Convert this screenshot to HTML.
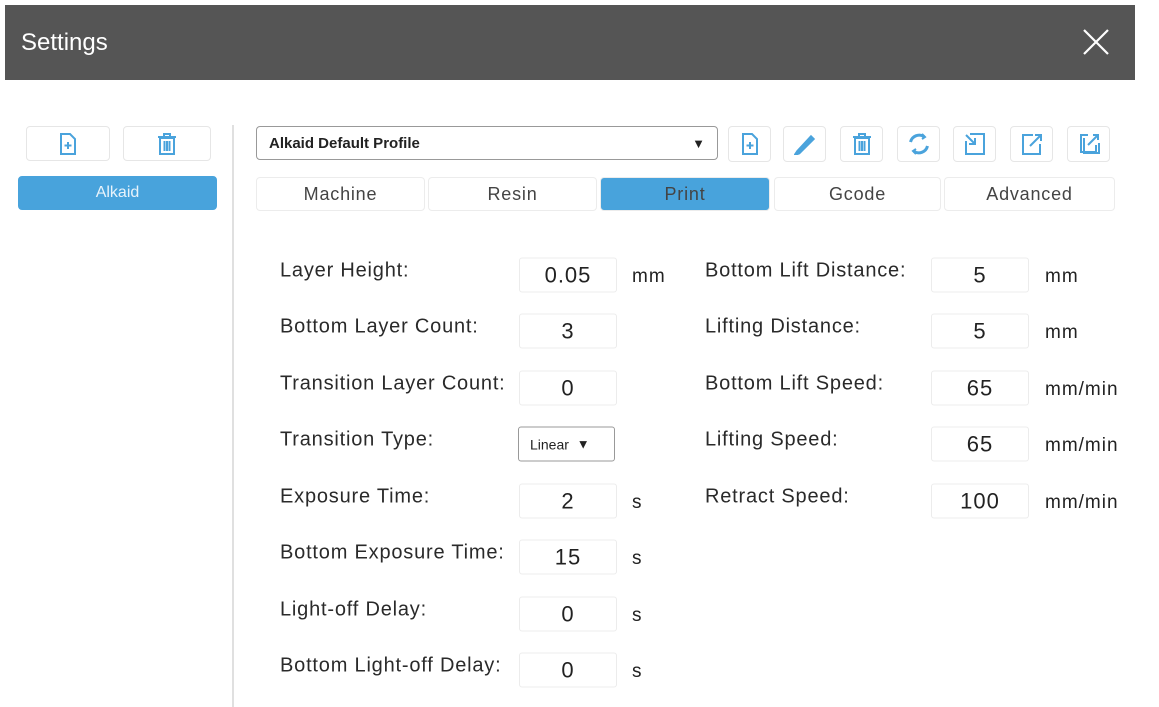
<!DOCTYPE html>
<html><head><meta charset="utf-8"><style>
*{box-sizing:border-box;margin:0;padding:0}
body{width:1159px;height:707px;background:#fff;position:relative;overflow:hidden;font-family:"Liberation Sans",sans-serif;color:#222}
.a{position:absolute}
.title{left:5px;top:5px;width:1130px;height:75px;background:#555555;color:#fff;font-size:24px;line-height:75px;padding-left:16px}
.btn{position:absolute;border:1px solid #e6e6e6;border-radius:4px;background:#fff;display:flex;align-items:center;justify-content:center}
.blue{background:#48a3dc;color:#e8f3fb;border-color:#48a3dc}
.tab{position:absolute;top:177px;height:34px;border:1px solid #ececec;border-radius:4px;font-size:18px;letter-spacing:0.8px;color:#444;display:flex;align-items:center;justify-content:center}
.lbl{position:absolute;font-size:20px;letter-spacing:0.8px;color:#2a2a2a;transform:translateY(-50%)}
.inp{position:absolute;width:98px;height:35px;border:1px solid #ececec;border-radius:3px;font-size:22px;letter-spacing:1px;display:flex;align-items:center;justify-content:center;transform:translateY(-50%)}
.unit{position:absolute;font-size:19px;letter-spacing:1px;transform:translateY(-40%)}
svg{stroke:#4aa3dc;fill:none;stroke-width:2}
</style></head><body>
<div class="a title">Settings</div>
<div class="a" style="left:1082px;top:28px;"><svg width="28" height="28" style="stroke:#fff;stroke-width:2.2"><path d="M2 2L26 26M26 2L2 26"/></svg></div>

<div class="btn" style="left:26px;top:126px;width:84px;height:35px"><svg width="18" height="22"><path d="M2 1h9l5 5v15H2z"/><path d="M9 9v7M5.5 12.5h7"/></svg></div>
<div class="btn" style="left:123px;top:126px;width:88px;height:35px"><svg width="20" height="22"><path d="M1 4h18M7 4V1h6v3M3 5h14v16H3zM7.5 8v10M10 8v10M12.5 8v10"/></svg></div>
<div class="btn blue" style="left:18px;top:176px;width:199px;height:34px;font-size:16px">Alkaid</div>
<div class="a" style="left:232px;top:125px;width:2px;height:582px;background:#e0e0e0"></div>

<div class="btn" style="left:256px;top:126px;width:462px;height:34px;border:1px solid #999;justify-content:space-between;padding:0 12px;font-size:15px;font-weight:bold;color:#222"><span>Alkaid Default Profile</span><span style="font-size:13px">▼</span></div>

<div class="btn" style="left:728px;top:126px;width:43px;height:36px"><svg width="18" height="22"><path d="M2 1h9l5 5v15H2z"/><path d="M9 9v7M5.5 12.5h7"/></svg></div>
<div class="btn" style="left:783px;top:126px;width:43px;height:36px"><svg width="22" height="22"><path d="M4 18l-2 3 3-1L19 6l-2-2z" fill="#4aa3dc" stroke-width="3"/></svg></div>
<div class="btn" style="left:840px;top:126px;width:43px;height:36px"><svg width="20" height="22"><path d="M1 4h18M7 4V1h6v3M3 5h14v16H3zM7.5 8v10M10 8v10M12.5 8v10"/></svg></div>
<div class="btn" style="left:897px;top:126px;width:43px;height:36px"><svg width="24" height="24" style="stroke-width:3"><path d="M3.5 10A9 9 0 0 1 17 4.5M20.5 14A9 9 0 0 1 7 19.5"/><path d="M15 2l3 3-3 2M9 22l-3-3 3-2" stroke-width="2"/></svg></div>
<div class="btn" style="left:953px;top:126px;width:43px;height:36px"><svg width="22" height="22"><path d="M6 1h14v20H2V8"/><path d="M2 2l9 9M11 5v6H5"/></svg></div>
<div class="btn" style="left:1010px;top:126px;width:43px;height:36px"><svg width="22" height="22"><path d="M12 2H2v19h17V11"/><path d="M9 13L20 2M14 2h6v6"/></svg></div>
<div class="btn" style="left:1067px;top:126px;width:43px;height:36px"><svg width="22" height="22"><path d="M10 2H3v17h15v-7"/><path d="M6 5v15h15V10"/><path d="M10 12L20 2M15 2h5v5"/></svg></div>

<div class="tab" style="left:256px;width:169px">Machine</div>
<div class="tab" style="left:428px;width:169px">Resin</div>
<div class="tab blue" style="left:600px;width:170px">Print</div>
<div class="tab" style="left:774px;width:167px">Gcode</div>
<div class="tab" style="left:944px;width:171px">Advanced</div>

<div class="lbl" style="left:280px;top:271px">Layer Height:</div><div class="inp" style="left:519px;top:275px">0.05</div><div class="unit" style="left:632px;top:275px">mm</div>
<div class="lbl" style="left:280px;top:327px">Bottom Layer Count:</div><div class="inp" style="left:519px;top:331px">3</div>
<div class="lbl" style="left:280px;top:384px">Transition Layer Count:</div><div class="inp" style="left:519px;top:388px">0</div>
<div class="lbl" style="left:280px;top:440px">Transition Type:</div><div class="inp" style="left:518px;top:444px;width:97px;border-color:#999;font-size:14px;letter-spacing:0;justify-content:flex-start;padding-left:11px">Linear&nbsp;&nbsp;<span style="font-size:13px">▼</span></div>
<div class="lbl" style="left:280px;top:497px">Exposure Time:</div><div class="inp" style="left:519px;top:501px">2</div><div class="unit" style="left:632px;top:501px">s</div>
<div class="lbl" style="left:280px;top:553px">Bottom Exposure Time:</div><div class="inp" style="left:519px;top:557px">15</div><div class="unit" style="left:632px;top:557px">s</div>
<div class="lbl" style="left:280px;top:610px">Light-off Delay:</div><div class="inp" style="left:519px;top:614px">0</div><div class="unit" style="left:632px;top:614px">s</div>
<div class="lbl" style="left:280px;top:666px">Bottom Light-off Delay:</div><div class="inp" style="left:519px;top:670px">0</div><div class="unit" style="left:632px;top:670px">s</div>

<div class="lbl" style="left:705px;top:271px">Bottom Lift Distance:</div><div class="inp" style="left:931px;top:275px">5</div><div class="unit" style="left:1045px;top:275px">mm</div>
<div class="lbl" style="left:705px;top:327px">Lifting Distance:</div><div class="inp" style="left:931px;top:331px">5</div><div class="unit" style="left:1045px;top:331px">mm</div>
<div class="lbl" style="left:705px;top:384px">Bottom Lift Speed:</div><div class="inp" style="left:931px;top:388px">65</div><div class="unit" style="left:1045px;top:388px">mm/min</div>
<div class="lbl" style="left:705px;top:440px">Lifting Speed:</div><div class="inp" style="left:931px;top:444px">65</div><div class="unit" style="left:1045px;top:444px">mm/min</div>
<div class="lbl" style="left:705px;top:497px">Retract Speed:</div><div class="inp" style="left:931px;top:501px">100</div><div class="unit" style="left:1045px;top:501px">mm/min</div>
</body></html>
